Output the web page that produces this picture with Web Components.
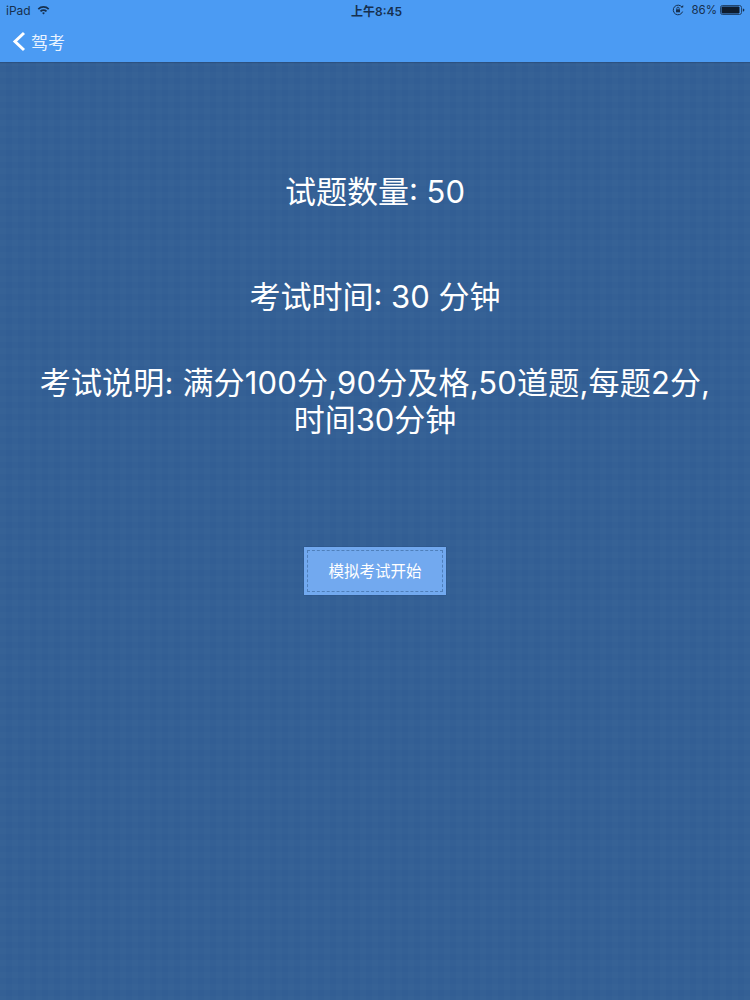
<!DOCTYPE html>
<html lang="zh"><head><meta charset="utf-8">
<style>
html,body{margin:0;padding:0;height:100%}
body{font-family:"Inter","Noto Sans CJK SC",sans-serif;background:#325e94}
</style></head><body>
<exam-page>
  <nav-header slot="header" title-text="驾考"></nav-header>
  <info-line style="margin-top:111px">试题数量: 50</info-line>
  <info-line style="margin-top:68px">考试时间: 30 分钟</info-line>
  <info-line style="margin-top:49px"><span style="letter-spacing:.17px">考试说明: 满分100分,90分及格,50道题,每题2分,</span><br>时间30分钟</info-line>
  <dash-button style="margin-top:109px">模拟考试开始</dash-button>
</exam-page>
<script>
const SC='"Inter","Noto Sans CJK SC",sans-serif';
function el(name,html){customElements.define(name,class extends HTMLElement{constructor(){super();this.attachShadow({mode:'open'}).innerHTML=html;}});}
el('exam-page',`<style>:host{display:flex;flex-direction:column;width:750px;height:1000px;overflow:hidden;
background-color:#325e94;background-image:linear-gradient(90deg,rgba(255,255,255,.012) 50%,transparent 50%),linear-gradient(rgba(255,255,255,.012) 50%,transparent 50%);background-size:12px 12px;font-family:${SC}}
.body{display:flex;flex-direction:column;align-items:center}</style>
<slot name="header"></slot><div class="body"><slot></slot></div>`);
customElements.define('nav-header',class extends HTMLElement{constructor(){super();
const t=this.getAttribute('title-text');
this.attachShadow({mode:'open'}).innerHTML=`<style>
:host{display:block;height:62px;background:#4b9bf3;box-shadow:0 1px 1px rgba(30,60,100,.4);font-family:${SC};box-sizing:border-box}
.status{height:20px;display:grid;grid-template-columns:1fr auto 1fr;align-items:center;padding:0 5px 0 6px;color:#16304f;font-size:12px}
.l,.r{display:flex;align-items:center}.l{gap:6px}.r{justify-content:flex-end;gap:3px}
.time{font-weight:600;font-size:12px;padding-left:2px}
.nav{display:flex;align-items:center;height:42px;padding-left:12px;gap:5px;color:#e9f3ff;font-size:17px}
svg{display:block}
</style>
<div class="status"><div class="l"><span>iPad</span>
<svg width="13" height="10" viewBox="0 0 13 10"><path d="M.7 3.4a8.4 8.4 0 0 1 11.6 0l-1.2 1.3a6.7 6.7 0 0 0-9.2 0z M2.9 5.7a5.3 5.3 0 0 1 7.2 0L8.9 7a3.6 3.6 0 0 0-4.8 0z M5.1 8a2 2 0 0 1 2.8 0L6.5 9.6z" fill="#16304f"/></svg></div>
<div class="time">上午8:45</div>
<div class="r"><svg width="12" height="12" viewBox="0 0 12 12" fill="none" stroke="#16304f"><path d="M10.6 7.6A4.8 4.8 0 1 1 10 3.2" stroke-width="1"/><path d="M8.8 3.4h2.4V1z" fill="#16304f" stroke="none"/><rect x="4" y="5.3" width="4" height="3" fill="#16304f" stroke="none"/><path d="M4.8 5.3V4.4a1.2 1.2 0 0 1 2.4 0v.9" stroke-width=".8"/></svg>
<span style="margin-left:4px;font-size:11.5px">86%</span>
<svg width="25" height="10" viewBox="0 0 25 10"><rect x=".5" y=".5" width="21" height="9" rx="2" fill="none" stroke="#16304f" stroke-width=".8"/><rect x="1.5" y="1.5" width="18" height="7" rx="1" fill="#0e1c2e"/><path d="M22.8 3.4c1 .2 1.6.8 1.6 1.6s-.6 1.4-1.6 1.6z" fill="#16304f"/></svg></div></div>
<div class="nav"><svg width="14" height="21" viewBox="0 0 14 21"><path d="M12 2 3 10.5l9 8.5" fill="none" stroke="#fff" stroke-width="3"/></svg><span>${t}</span></div>`;}});
el('info-line',`<style>:host{display:block;width:750px;text-align:center;color:#fff;font-size:31px;line-height:37px;font-family:${SC}}</style><slot></slot>`);
el('dash-button',`<style>:host{display:block;box-sizing:border-box;width:142px;height:48px;padding:3px;background:#72a9ef;box-shadow:0 0 1px rgba(20,40,70,.5);color:#fff;font-size:15.5px;font-family:${SC}}
.in{box-sizing:border-box;height:100%;border:1px dashed #4f7fba;display:flex;align-items:center;justify-content:center;padding-bottom:2px}</style><div class="in"><slot></slot></div>`);
</script></body></html>
